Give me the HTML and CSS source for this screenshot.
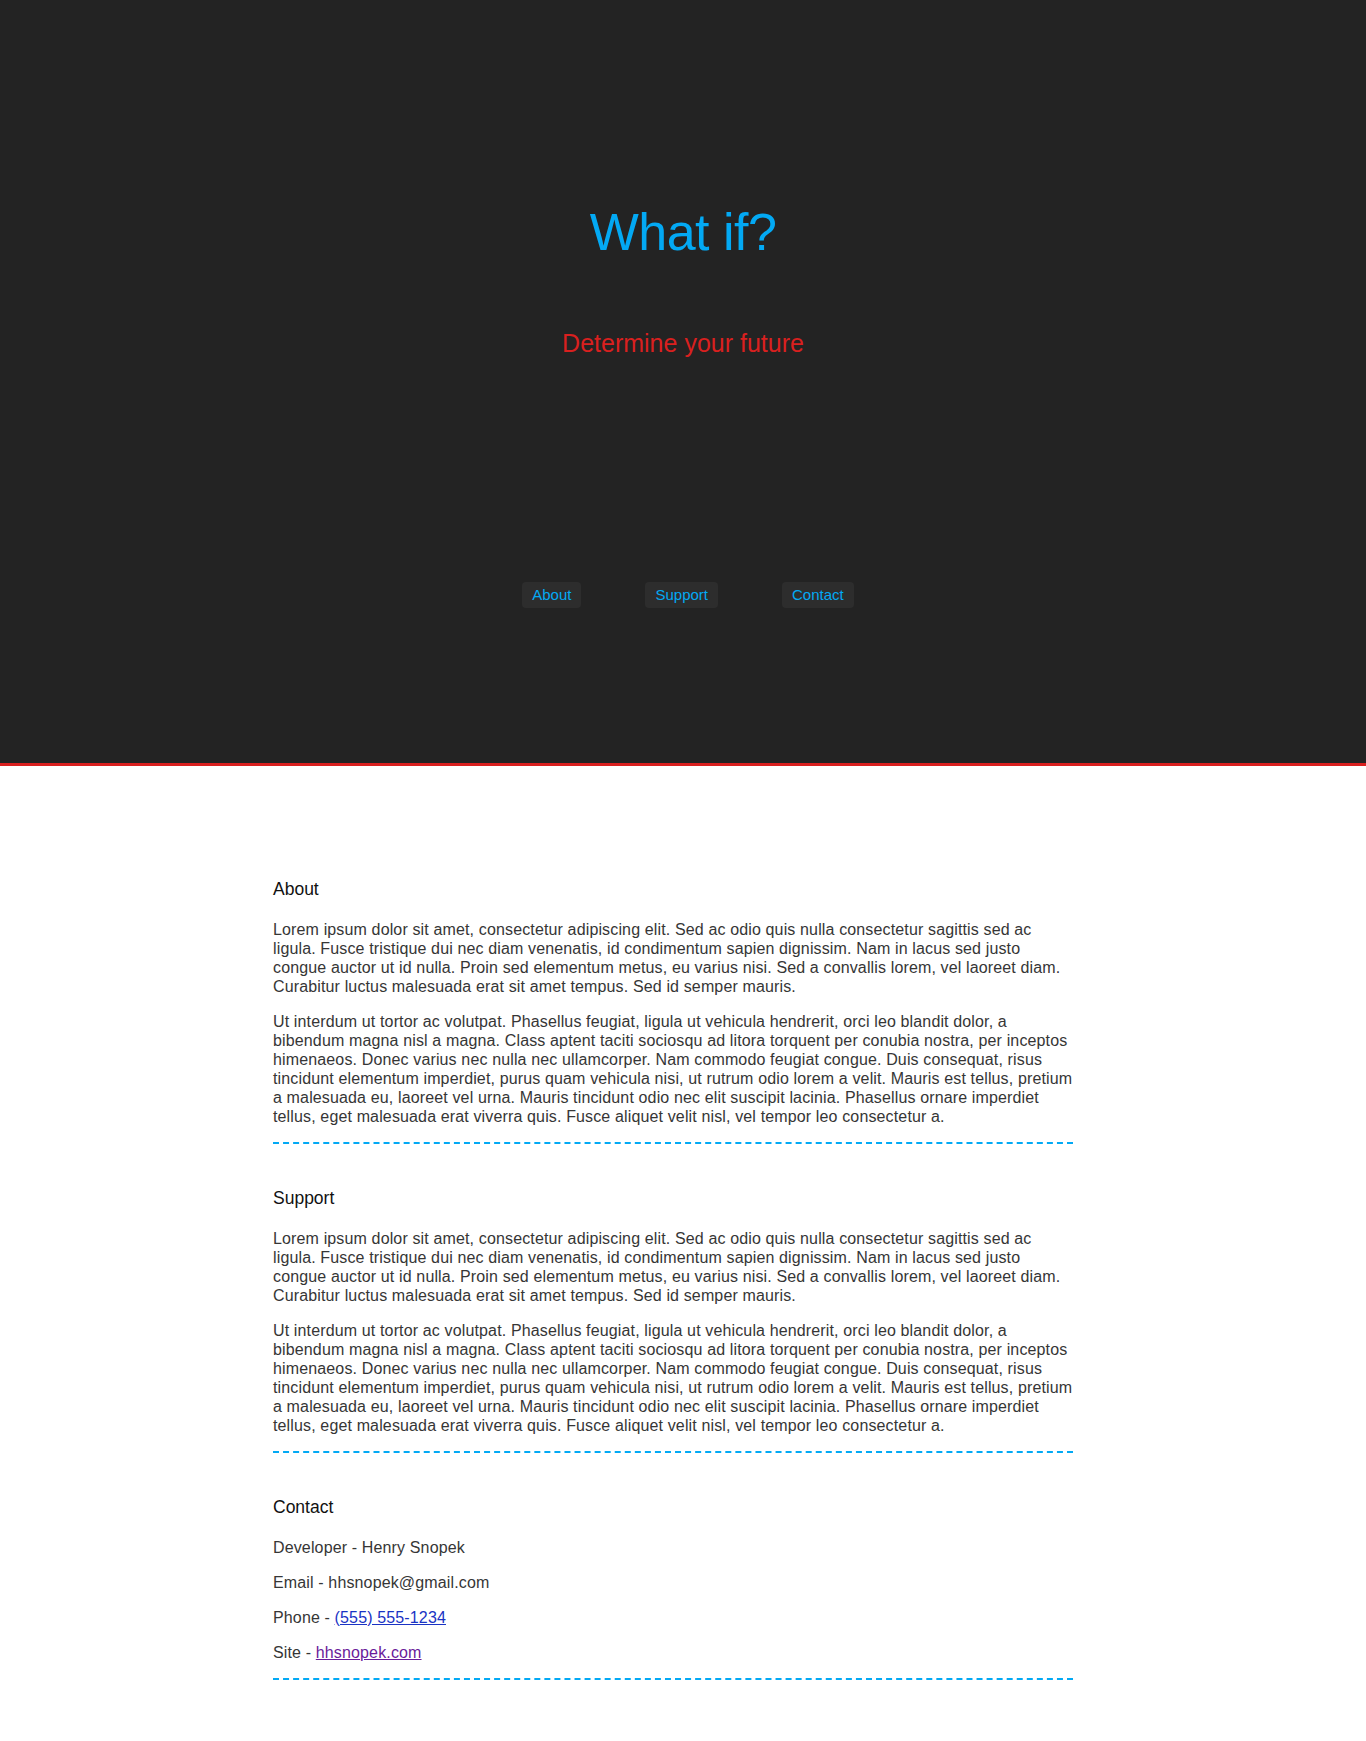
FILE: index.html
```html
<!DOCTYPE html>
<html lang="en">
<head>
<meta charset="utf-8">
<title>What if?</title>
<link rel="stylesheet" href="styles.css">
</head>
<body>
<header class="hero">
  <h1 class="hero-title">What if?</h1>
  <h2 class="hero-subtitle">Determine your future</h2>
  <nav class="hero-nav">
    <a class="nav-btn" href="#about">About</a>
    <a class="nav-btn" href="#support">Support</a>
    <a class="nav-btn" href="#contact">Contact</a>
  </nav>
</header>
<main class="content">
  <section class="block" id="about">
    <h3 class="block-title">About</h3>
    <p>Lorem ipsum dolor sit amet, consectetur adipiscing elit. Sed ac odio quis nulla consectetur sagittis sed ac ligula. Fusce tristique dui nec diam venenatis, id condimentum sapien dignissim. Nam in lacus sed justo congue auctor ut id nulla. Proin sed elementum metus, eu varius nisi. Sed a convallis lorem, vel laoreet diam. Curabitur luctus malesuada erat sit amet tempus. Sed id semper mauris.</p>
    <p>Ut interdum ut tortor ac volutpat. Phasellus feugiat, ligula ut vehicula hendrerit, orci leo blandit dolor, a bibendum magna nisl a magna. Class aptent taciti sociosqu ad litora torquent per conubia nostra, per inceptos himenaeos. Donec varius nec nulla nec ullamcorper. Nam commodo feugiat congue. Duis consequat, risus tincidunt elementum imperdiet, purus quam vehicula nisi, ut rutrum odio lorem a velit. Mauris est tellus, pretium a malesuada eu, laoreet vel urna. Mauris tincidunt odio nec elit suscipit lacinia. Phasellus ornare imperdiet tellus, eget malesuada erat viverra quis. Fusce aliquet velit nisl, vel tempor leo consectetur a.</p>
  </section>
  <section class="block" id="support">
    <h3 class="block-title">Support</h3>
    <p>Lorem ipsum dolor sit amet, consectetur adipiscing elit. Sed ac odio quis nulla consectetur sagittis sed ac ligula. Fusce tristique dui nec diam venenatis, id condimentum sapien dignissim. Nam in lacus sed justo congue auctor ut id nulla. Proin sed elementum metus, eu varius nisi. Sed a convallis lorem, vel laoreet diam. Curabitur luctus malesuada erat sit amet tempus. Sed id semper mauris.</p>
    <p>Ut interdum ut tortor ac volutpat. Phasellus feugiat, ligula ut vehicula hendrerit, orci leo blandit dolor, a bibendum magna nisl a magna. Class aptent taciti sociosqu ad litora torquent per conubia nostra, per inceptos himenaeos. Donec varius nec nulla nec ullamcorper. Nam commodo feugiat congue. Duis consequat, risus tincidunt elementum imperdiet, purus quam vehicula nisi, ut rutrum odio lorem a velit. Mauris est tellus, pretium a malesuada eu, laoreet vel urna. Mauris tincidunt odio nec elit suscipit lacinia. Phasellus ornare imperdiet tellus, eget malesuada erat viverra quis. Fusce aliquet velit nisl, vel tempor leo consectetur a.</p>
  </section>
  <section class="block" id="contact">
    <h3 class="block-title">Contact</h3>
    <p>Developer - Henry Snopek</p>
    <p>Email - hhsnopek@gmail.com</p>
    <p>Phone - <a class="link" href="#phone">(555) 555-1234</a></p>
    <p>Site - <a class="link link-visited" href="#site">hhsnopek.com</a></p>
  </section>
</main>
</body>
</html>
```

FILE: styles.css
```css
html, body {
  margin: 0;
  padding: 0;
  background: #ffffff;
}

body {
  font-family: "Liberation Sans", Arial, sans-serif;
  color: #363636;
}

.hero {
  background: #232323;
  border-bottom: 3px solid #d9201f;
  height: 766px;
  box-sizing: border-box;
  padding-top: 200px;
  display: flex;
  flex-direction: column;
  align-items: center;
}

.hero-title {
  margin: 0;
  font-size: 52px;
  line-height: 64px;
  font-weight: normal;
  letter-spacing: -0.5px;
  color: #03a9f4;
}

.hero-subtitle {
  margin: 64px 0 0;
  font-size: 25px;
  line-height: 30px;
  font-weight: normal;
  color: #d9201f;
}

.hero-nav {
  margin-top: 224px;
  display: flex;
  gap: 64px;
  padding-left: 10px;
}

.nav-btn {
  display: block;
  padding: 3px 10px;
  font-size: 15px;
  line-height: 20px;
  color: #03a9f4;
  background: #2d2d2d;
  border-radius: 4px;
  text-decoration: none;
}

.content {
  width: 800px;
  margin: 0 auto;
  padding: 69px 20px 60px 0;
}

.block {
  padding-top: 43px;
  border-bottom: 2px dashed #03a9f4;
}

.block-title {
  margin: 0 0 20px;
  font-size: 17.5px;
  line-height: 22px;
  font-weight: normal;
  color: #111111;
}

.block p {
  margin: 0 0 16px;
  font-size: 16px;
  line-height: 19px;
  letter-spacing: 0.14px;
}

.link {
  color: #1a33c4;
  text-decoration: underline;
}

.link-visited {
  color: #6a1b9a;
}
```
